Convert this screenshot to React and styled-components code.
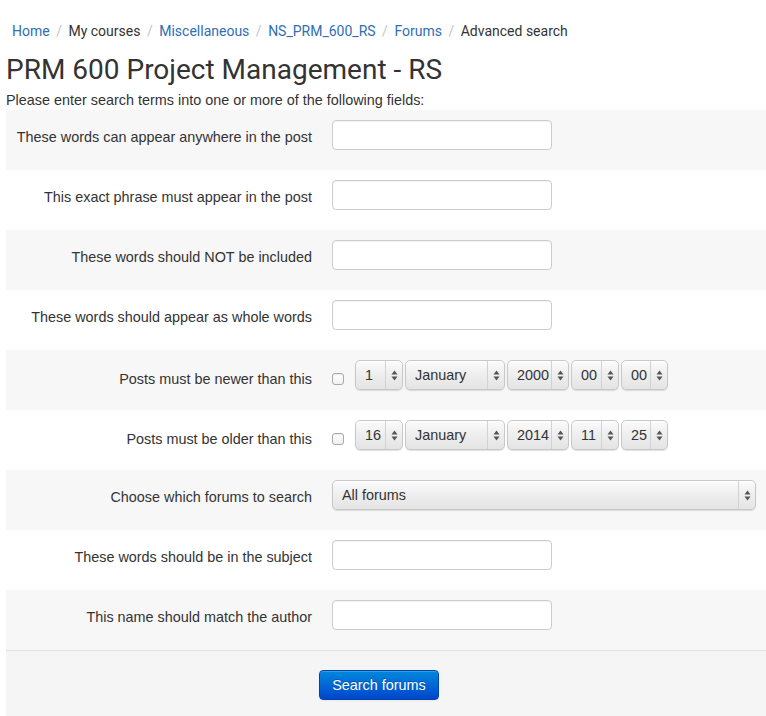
import React from "react";
import styled, { createGlobalStyle } from "styled-components";

const GlobalStyle = createGlobalStyle`
  html, body { margin: 0; padding: 0; background: #ffffff; }
  body { font-family: "Liberation Sans", Arial, Helvetica, sans-serif; color: #333333; }
  * { box-sizing: border-box; }
`;

const Page = styled.div`
  padding-left: 6px;
  width: 766px;
`;

const Crumbs = styled.nav`
  display: flex;
  align-items: center;
  padding: 22px 0 0 6px;
  height: 40px;
  font-family: Roboto, "Liberation Sans", sans-serif;
  font-size: 14px;
  line-height: 18px;
`;

const Crumb = styled.span`
  color: ${(p) => (p.$link ? "#2f6eb5" : "#333333")};
`;

const Sep = styled.span`
  color: #c4c4c4;
  margin: 0 6.5px;
`;

const Title = styled.h2`
  margin: 0;
  font-family: Roboto, "Liberation Sans", sans-serif;
  font-weight: 400;
  font-size: 28px;
  line-height: 32px;
  color: #333333;
  padding-top: 14px;
`;

const Intro = styled.p`
  margin: 0;
  font-size: 14.4px;
  line-height: 18px;
  padding-top: 5px;
  height: 24px;
`;

const Row = styled.div`
  display: grid;
  grid-template-columns: 306px 1fr;
  column-gap: 20px;
  align-items: start;
  height: 60px;
  padding: 10px 10px 0 0;
  background: ${(p) => (p.$shaded ? "#f7f7f7" : "#ffffff")};
`;

const Label = styled.div`
  text-align: right;
  font-size: 14.4px;
  line-height: 20px;
  padding-top: ${(p) => (p.$date ? 9 : 7)}px;
  color: #333333;
  white-space: nowrap;
`;

const TextInput = styled.div`
  width: 220px;
  height: 30px;
  background: #ffffff;
  border: 1px solid #cccccc;
  border-radius: 4px;
  box-shadow: inset 0 1px 1px rgba(0, 0, 0, 0.05);
`;

const DateGroup = styled.div`
  display: flex;
  align-items: flex-start;
  gap: 2px;
`;

const Check = styled.span`
  width: 12px;
  height: 12px;
  margin: 13px 9px 0 0;
  border: 1px solid #a9a9a9;
  border-radius: 3px;
  background: linear-gradient(#ffffff, #f0f0f0);
  box-shadow: inset 0 1px 1px rgba(0, 0, 0, 0.08);
`;

const SelectBox = styled.div`
  display: flex;
  align-items: stretch;
  width: ${(p) => p.$w}px;
  height: 30px;
  border: 1px solid #c8c8c8;
  border-radius: 5px;
  background: linear-gradient(#fbfbfb 0%, #efefef 45%, #e4e4e4 100%);
  box-shadow: 0 1px 1px rgba(0, 0, 0, 0.12), inset 0 1px 0 #ffffff;
  font-size: 14.4px;
  color: #333333;
`;

const SelectText = styled.span`
  flex: 1;
  display: flex;
  align-items: center;
  padding-left: 9px;
  white-space: nowrap;
`;

const SelectArrow = styled.span`
  width: 17px;
  display: flex;
  align-items: center;
  justify-content: center;
  border-left: 1px solid #d2d2d2;
`;

const Arrows = () => (
  <svg width="7" height="11" viewBox="0 0 7 11">
    <path d="M3.5 0.5 L6.5 4.5 L0.5 4.5 Z" fill="#555" />
    <path d="M3.5 10.5 L6.5 6.5 L0.5 6.5 Z" fill="#555" />
  </svg>
);

const Select = ({ w, children }) => (
  <SelectBox $w={w}>
    <SelectText>{children}</SelectText>
    <SelectArrow>
      <Arrows />
    </SelectArrow>
  </SelectBox>
);

const Footer = styled.div`
  border-top: 1px solid #e3e3e3;
  background: #f5f5f5;
  padding: 19px 0 20px 313px;
  height: 80px;
`;

const Button = styled.button`
  width: 120px;
  height: 30px;
  border: 1px solid #0044aa;
  border-radius: 4px;
  background: linear-gradient(#0088dd, #0046cc);
  color: #ffffff;
  font-family: "Liberation Sans", Arial, sans-serif;
  font-size: 14.4px;
  padding: 0;
  text-shadow: 0 -1px 0 rgba(0, 0, 0, 0.25);
  box-shadow: inset 0 1px 0 rgba(255, 255, 255, 0.2), 0 1px 2px rgba(0, 0, 0, 0.05);
`;

const DateRow = ({ shaded, label, vals }) => (
  <Row $shaded={shaded}>
    <Label $date>{label}</Label>
    <DateGroup>
      <Check />
      <Select w={48}>{vals[0]}</Select>
      <Select w={100}>January</Select>
      <Select w={62}>{vals[1]}</Select>
      <Select w={48}>{vals[2]}</Select>
      <Select w={47}>{vals[3]}</Select>
    </DateGroup>
  </Row>
);

const InputRow = ({ shaded, label }) => (
  <Row $shaded={shaded}>
    <Label>{label}</Label>
    <div>
      <TextInput />
    </div>
  </Row>
);

export default function App() {
  return (
    <Page>
      <GlobalStyle />
      <Crumbs>
        <Crumb $link>Home</Crumb>
        <Sep>/</Sep>
        <Crumb>My courses</Crumb>
        <Sep>/</Sep>
        <Crumb $link>Miscellaneous</Crumb>
        <Sep>/</Sep>
        <Crumb $link>NS_PRM_600_RS</Crumb>
        <Sep>/</Sep>
        <Crumb $link>Forums</Crumb>
        <Sep>/</Sep>
        <Crumb>Advanced search</Crumb>
      </Crumbs>
      <Title>PRM 600 Project Management - RS</Title>
      <Intro>Please enter search terms into one or more of the following fields:</Intro>
      <InputRow shaded label="These words can appear anywhere in the post" />
      <InputRow label="This exact phrase must appear in the post" />
      <InputRow shaded label="These words should NOT be included" />
      <InputRow label="These words should appear as whole words" />
      <DateRow shaded label="Posts must be newer than this" vals={["1", "2000", "00", "00"]} />
      <DateRow label="Posts must be older than this" vals={["16", "2014", "11", "25"]} />
      <Row $shaded>
        <Label>Choose which forums to search</Label>
        <div>
          <Select w={424}>All forums</Select>
        </div>
      </Row>
      <InputRow label="These words should be in the subject" />
      <InputRow shaded label="This name should match the author" />
      <Footer>
        <Button>Search forums</Button>
      </Footer>
    </Page>
  );
}
